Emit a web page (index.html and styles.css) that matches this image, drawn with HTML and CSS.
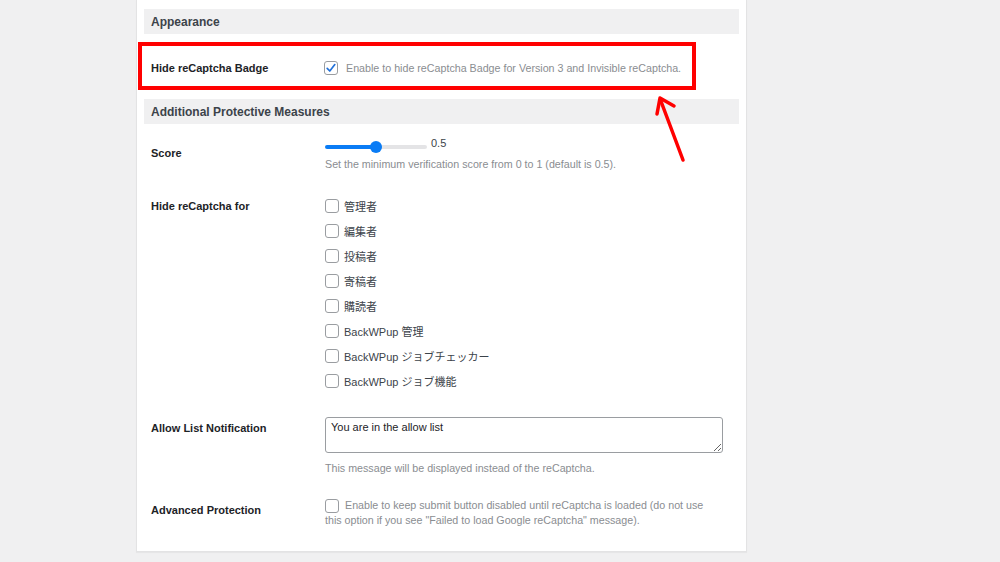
FILE: index.html
```html
<!DOCTYPE html>
<html>
<head>
<meta charset="utf-8">
<link rel="stylesheet" href="styles.css">
</head>
<body>
<div class="page">
  <div class="card">
    <h2 class="section-title">Appearance</h2>
    <div class="row row-badge">
      <div class="row-label">Hide reCaptcha Badge</div>
      <div class="row-field">
        <label class="check check-badge">
          <span class="box"><svg width="12" height="12" viewBox="0 0 12 12"><path d="M2.2 6.3 L4.8 9 L9.8 2.6" fill="none" stroke="#2271d9" stroke-width="1.7" stroke-linecap="round" stroke-linejoin="round"/></svg></span>
          <span class="desc">Enable to hide reCaptcha Badge for Version 3 and Invisible reCaptcha.</span>
        </label>
      </div>
    </div>

    <h2 class="section-title">Additional Protective Measures</h2>
    <div class="row row-score">
      <div class="row-label">Score</div>
      <div class="row-field">
        <div class="slider-line">
          <input class="slider" type="range" min="0" max="1" step="0.1" value="0.5">
          <span class="slider-value">0.5</span>
        </div>
        <p class="desc help">Set the minimum verification score from 0 to 1 (default is 0.5).</p>
      </div>
    </div>

    <div class="row row-roles">
      <div class="row-label">Hide reCaptcha for</div>
      <div class="row-field">
        <ul class="role-list">
          <li><span class="box"></span>管理者</li>
          <li><span class="box"></span>編集者</li>
          <li><span class="box"></span>投稿者</li>
          <li><span class="box"></span>寄稿者</li>
          <li><span class="box"></span>購読者</li>
          <li><span class="box"></span>BackWPup 管理</li>
          <li><span class="box"></span>BackWPup ジョブチェッカー</li>
          <li><span class="box"></span>BackWPup ジョブ機能</li>
        </ul>
      </div>
    </div>

    <div class="row row-allow">
      <div class="row-label">Allow List Notification</div>
      <div class="row-field">
        <textarea class="notice-text">You are in the allow list</textarea>
        <p class="desc help">This message will be displayed instead of the reCaptcha.</p>
      </div>
    </div>

    <div class="row row-advanced">
      <div class="row-label">Advanced Protection</div>
      <div class="row-field">
        <p class="desc advanced-text"><span class="box"></span>Enable to keep submit button disabled until reCaptcha is loaded (do not use<br>this option if you see "Failed to load Google reCaptcha" message).</p>
      </div>
    </div>
  </div>

  <!-- annotation -->
  <div class="highlight"></div>
  <svg class="arrow" width="1000" height="562" viewBox="0 0 1000 562">
    <path d="M657 114 L660 98 L674 106" fill="none" stroke="#ff0000" stroke-width="3.5" stroke-linecap="round" stroke-linejoin="round"/>
    <path d="M660.5 100 L683 160" fill="none" stroke="#ff0000" stroke-width="3.5" stroke-linecap="round"/>
  </svg>
</div>
</body>
</html>
```

FILE: styles.css
```css
* {
	box-sizing: border-box;
}

html, body {
	margin: 0;
	padding: 0;
}

body {
	font-family: "Liberation Sans", "Noto Sans CJK JP", sans-serif;
	font-size: 11px;
	color: #1d2327;
	background-color: #f0f0f1;
}

.page {
	position: relative;
	width: 1000px;
	height: 562px;
	overflow: hidden;
}

.card {
	margin-left: 136px;
	width: 611px;
	background-color: #fff;
	border: 1px solid #e3e3e4;
	border-top: none;
	padding: 9px 7px 23px;
	box-shadow: 0 1px 1px rgba(0, 0, 0, 0.04);
}

.section-title {
	margin: 0;
	height: 25px;
	line-height: 26px;
	padding: 0 7px;
	background-color: #f0f0f1;
	color: #3c434a;
	font-size: 12px;
	font-weight: bold;
}

.row {
	display: flex;
	padding-left: 7px;
}

.row-label {
	width: 174px;
	flex: none;
	font-weight: bold;
	line-height: 14px;
}

.row-field {
	flex: 1;
}

.desc {
	color: #8a8d91;
	font-size: 10.7px;
	line-height: 14px;
	margin: 0;
}

.box {
	display: inline-block;
	width: 14px;
	height: 14px;
	border: 1px solid #9a9da1;
	border-radius: 3px;
	background-color: #fff;
	vertical-align: top;
}

.box svg {
	display: block;
	margin: 0;
}

/* badge row */
.row-badge {
	padding-top: 27px;
	padding-bottom: 24px;
}

.check {
	display: flex;
	align-items: center;
	line-height: 14px;
}

.check-badge {
	margin-left: -1px;
}

.check-badge .box {
	margin-right: 8px;
}

/* score */
.row-score {
	padding-top: 12px;
}

.row-score .row-label {
	margin-top: 10px;
}

.slider-line {
	display: flex;
	align-items: flex-start;
	height: 14px;
	line-height: 14px;
}

.slider {
	-webkit-appearance: none;
	appearance: none;
	width: 102px;
	height: 4px;
	margin: 9px 0 0;
	border-radius: 3px;
	background: linear-gradient(to right, #0a7cf5 50%, #e4e4e6 50%);
	outline: none;
}

.slider::-webkit-slider-thumb {
	-webkit-appearance: none;
	appearance: none;
	width: 12px;
	height: 12px;
	border-radius: 50%;
	background-color: #0a7cf5;
	border: none;
}

.slider-value {
	margin-left: 4px;
	color: #3c434a;
}

.help {
	margin-top: 7px;
}

/* roles */
.row-roles {
	padding-top: 22px;
}

.row-roles .row-label {
	margin-top: 6px;
}

.role-list {
	list-style: none;
	margin: 0;
	padding: 0;
}

.role-list li {
	height: 25px;
	display: flex;
	align-items: center;
	color: #3c434a;
}

.role-list .box {
	margin-right: 5px;
}

/* allow list */
.row-allow {
	padding-top: 24px;
}

.row-allow .row-label {
	margin-top: 4px;
}

.notice-text {
	display: block;
	width: 398px;
	height: 36px;
	margin: 0;
	padding: 2px 5px;
	border: 1px solid #9a9da1;
	border-radius: 3px;
	font-family: inherit;
	font-size: 11px;
	line-height: 14px;
	color: #1d2327;
	resize: vertical;
}

.row-allow .help {
	margin-top: 8px;
}

/* advanced */
.row-advanced {
	padding-top: 23px;
}

.row-advanced .row-label {
	margin-top: 5px;
}

.advanced-text {
	line-height: 15px;
}

.advanced-text .box {
	margin: 1px 6px 0 0;
}

/* annotation */
.highlight {
	position: absolute;
	left: 138px;
	top: 42px;
	width: 558px;
	height: 48px;
	border: 4px solid #ff0000;
}

.arrow {
	position: absolute;
	left: 0;
	top: 0;
}
```
